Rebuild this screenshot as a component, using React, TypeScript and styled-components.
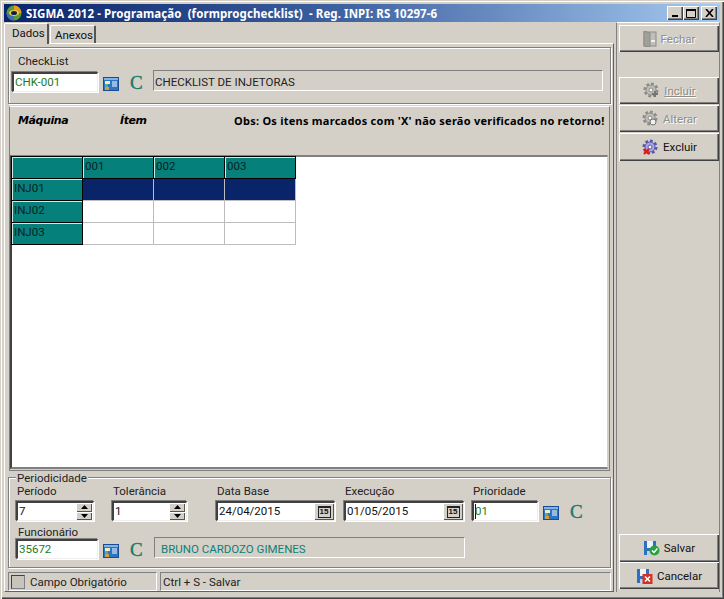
import React from 'react';
import styled, { createGlobalStyle } from 'styled-components';

const Global = createGlobalStyle`
  html, body { margin: 0; padding: 0; background: #d4d0c8; overflow: hidden; }
  * { box-sizing: border-box; }
`;
const FONT = `Roboto, "Liberation Sans", Arial, sans-serif`;
const BOLD = `"Noto Sans", "DejaVu Sans", sans-serif`;

const Window = styled.div`
  width: 724px; height: 599px; background: #d4d0c8; display: flex; flex-direction: column;
  padding: 4px 4px 3px 4px; overflow: hidden; font-family: ${FONT}; font-size: 11.5px; color: #000;
  box-shadow: inset 1px 1px 0 #d4d0c8, inset 2px 2px 0 #fff, inset -1px -1px 0 #404040, inset -2px -2px 0 #808080;
`;
const TitleBar = styled.div`
  height: 18px; flex: none; display: flex; align-items: center; padding: 0 3px 0 2px;
  background: linear-gradient(90deg, #0a246a 0%, #3a5e9e 45%, #a6caf0 100%);
`;
const TitleText = styled.span`
  margin-left: 4px; color: #fff; font: bold 11.5px ${BOLD}; letter-spacing: 0.09px; white-space: pre; flex: 1;
`;
const WinButtons = styled.div` display: flex; `;
const WinBtn = styled.div<{ $gap?: number }>`
  width: 16px; height: 14px; margin-left: ${p => p.$gap ?? 0}px; background: #d4d0c8; display: flex; align-items: center; justify-content: center;
  box-shadow: inset 1px 1px 0 #fff, inset -1px -1px 0 #404040, inset -2px -2px 0 #808080;
`;
const Main = styled.div` flex: 1; display: flex; min-height: 0; `;
const Left = styled.div` width: 612px; flex: none; display: flex; flex-direction: column; `;
const Tabs = styled.div` height: 21px; flex: none; display: flex; align-items: flex-end; `;
const Tab = styled.div<{ $active?: boolean }>`
  height: ${p => p.$active ? 21 : 18}px; width: ${p => p.$active ? 45 : 46}px; margin-left: ${p => p.$active ? 0 : 1}px;
  padding: ${p => p.$active ? '2px 0 0 7px' : '2px 0 0 4px'}; color: #111;
  border-top: 1px solid #fff; border-left: 1px solid #fff; border-right: 2px solid #555;
  border-radius: 2px 2px 0 0;
  ${p => p.$active ? 'margin-bottom: -1px; z-index: 1; background: #d4d0c8;' : ''}
`;
const Pane = styled.div`
  flex: none; height: 549px; width: 610px; padding: 3px 0 0 3px;
  border-top: 1px solid #fff; border-left: 1px solid #fff; border-right: 1px solid #606060; border-bottom: 1px solid #606060;
  display: flex; flex-direction: column;
`;
const TopGroup = styled.div`
  height: 57px; width: 603px; flex: none; padding: 7px 0 0 3px;
  border: 1px solid #808080; box-shadow: inset 1px 1px 0 #fff, 1px 1px 0 #fff;
`;
const GroupLabel = styled.div` margin-left: 6px; height: 17px; line-height: 13px; color: #222; `;
const LookupRow = styled.div` display: flex; align-items: center; `;
const Input = styled.div<{ $w: number; $h?: number }>`
  width: ${p => p.$w}px; height: ${p => p.$h ?? 20}px; background: #fff; flex: none; display: flex; align-items: center; position: relative;
  border-top: 2px solid #404040; border-left: 2px solid #404040; border-right: 1px solid #eee; border-bottom: 1px solid #eee;
  box-shadow: 1px 1px 0 #fff, -1px -1px 0 #808080; padding: 0 0 1px 1px; color: #111;
`;
const GreenText = styled.span` color: #1d7a1d; `;
const Caret = styled.span` display: inline-block; width: 1px; height: 15px; background: #111; margin-right: -1px; `;
const CLetter = styled.span<{ $ml?: number }>`
  margin-left: ${p => p.$ml ?? 11}px; width: 13px; font: 400 19px "Liberation Serif", serif; -webkit-text-stroke: 0.4px #207a6c; color: #207a6c; line-height: 18px; margin-top: 2px;
`;
const Display = styled.div<{ $w: number; $teal?: boolean; $ml?: number }>`
  width: ${p => p.$w}px; height: 21px; margin-left: ${p => p.$ml ?? 10}px; margin-top: -3px; padding: 2px 0 0 ${p => p.$teal ? 6 : 1}px; display: flex; align-items: center;
  color: ${p => p.$teal ? '#0f7f76' : '#222'};
  border-top: 1px solid #808080; border-left: 1px solid #808080; border-right: 1px solid #fff; border-bottom: 1px solid #fff;
`;
const GridPanel = styled.div`
  margin: 2px 0 0 1px; width: 601px; height: 365px; flex: none;
  border-top: 1px solid #fff; border-left: 1px solid #808080; border-right: 1px solid #808080; border-bottom: 1px solid #808080;
  display: flex; flex-direction: column;
`;
const GridHeader = styled.div` height: 48px; flex: none; display: flex; align-items: flex-start; padding: 7px 0 0 8px; `;
const HeaderCaption = styled.div<{ $w: number }>`
  width: ${p => p.$w}px; font: italic bold 11px "DejaVu Sans", sans-serif; letter-spacing: -0.4px; line-height: 13px; flex: none;
`;
const Obs = styled.div`
  font: bold 11px ${BOLD}; letter-spacing: 0.25px; line-height: 13px; white-space: nowrap; color: #000;
`;
const GridBox = styled.div`
  width: 598px; height: 314px; background: #fff;
  border-top: 2px solid #808080; border-left: 2px solid #404040; border-right: 1px solid #d4d0c8; border-bottom: 2px solid #808080;
`;
const Table = styled.div`
  display: grid; grid-template-columns: repeat(4, 70px); grid-auto-rows: 21px; gap: 1px; width: 284px; background: #bdbdbd; padding: 0 1px 1px 0;
`;
const FixedCell = styled.div`
  background: #05807a; color: #082222; padding: 2px 0 0 2px; line-height: 14px;
  box-shadow: inset 1px 1px 0 #d0e8e4, 0 0 0 1px #000;
`;
const DataCell = styled.div<{ $sel?: boolean }>` background: ${p => p.$sel ? '#0a246a' : '#fff'}; `;
const Period = styled.div`
  position: relative; margin-top: 6px; padding: 7px 0 0 7px; width: 603px; height: 91px; flex: none;
  border: 1px solid #808080; box-shadow: inset 1px 1px 0 #fff, 1px 1px 0 #fff;
`;
const Legend = styled.div`
  position: absolute; left: 7px; top: -6px; padding: 0 1px; background: #d4d0c8; color: #222; line-height: 12px; height: 12px;
`;
const FieldRow = styled.div` display: flex; height: 41px; `;
const Field = styled.div<{ $w: number }>` width: ${p => p.$w}px; flex: none; display: flex; flex-direction: column; `;
const FieldLabel = styled.label<{ $h?: number; $pl?: number }>` height: ${p => p.$h ?? 16}px; line-height: 13px; padding-left: ${p => p.$pl ?? 1}px; color: #222; `;
const Spin = styled.div`
  position: absolute; right: 1px; top: 0; width: 16px; height: 17px; display: flex; flex-direction: column;
`;
const SpinBtn = styled.div`
  flex: 1; background: #d4d0c8; display: flex; align-items: center; justify-content: center;
  box-shadow: inset 1px 1px 0 #fff, inset -1px -1px 0 #555;
`;
const CalBtn = styled.div`
  position: absolute; right: 0; top: 0; width: 20px; height: 17px; background: #d4d0c8; display: flex; align-items: center; justify-content: center;
  box-shadow: inset 1px 1px 0 #fff, inset -1px -1px 0 #555;
`;
const CalGlyph = styled.span`
  border: 1px solid #222; border-top-width: 2px; font: bold 8px/8px "Liberation Sans", sans-serif; width: 13px; height: 12px; text-align: center; color: #111;
`;
const StatusBar = styled.div` display: flex; height: 19px; margin-top: 4px; width: 603px; flex: none; `;
const StatusCell = styled.div<{ $w: number }>`
  width: ${p => p.$w}px; flex: none; margin-right: 3px; display: flex; align-items: center; padding-left: 2px; color: #222;
  border-top: 1px solid #808080; border-left: 1px solid #808080; border-right: 1px solid #fff; border-bottom: 1px solid #fff;
`;
const Swatch = styled.div`
  width: 14px; height: 14px; margin-right: 5px; background: #c8c4bc; border: 1px solid #404040; border-right-color: #808080; border-bottom-color: #808080;
`;
const Side = styled.div`
  width: 104px; flex: none; padding: 2px 0 0 2px; display: flex; flex-direction: column; height: 570px;
  border-left: 1px solid #808080; border-top: 1px solid #fff; border-right: 1px solid #808080;
`;
const Action = styled.div<{ $mt?: number; $off?: boolean; $h?: number }>`
  width: 100px; height: ${p => p.$h ?? 27}px; flex: none; margin-top: ${p => p.$mt ?? 0}px; display: flex; align-items: center; justify-content: center; gap: 4px;
  background: #d4d0c8; color: ${p => p.$off ? '#8e8c86' : '#111'};
  ${p => p.$off ? 'text-shadow: 1px 1px 0 #fff;' : ''}
  box-shadow: inset 1px 1px 0 #fff, inset -1px -1px 0 #404040, inset -2px -2px 0 #808080;
`;
const Underlined = styled.span` text-decoration: underline; `;

const Logo = () => (
  <svg width="16" height="16" viewBox="0 0 16 16">
    <circle cx="8" cy="8" r="7.5" fill="#5c9a3c" />
    <path d="M8 .5A7.5 7.5 0 0 1 15.5 8H8z" fill="#e89a20" />
    <path d="M8 15.5A7.5 7.5 0 0 1 .5 8H8z" fill="#3f6fb8" />
    <path d="M3 8a5 3 0 0 1 10 0 5 3 0 0 1-10 0" fill="#e8d040" />
    <ellipse cx="8" cy="8" rx="3" ry="2" fill="#10204a" />
  </svg>
);
const Card = () => (
  <svg width="16" height="15" viewBox="0 0 16 15" style={{ marginLeft: 5, marginTop: 2, flex: 'none' }}>
    <rect x="0.5" y="1.5" width="15" height="13" fill="#2c74c4" stroke="#1a4c94" />
    <rect x="1" y="2" width="14" height="2" fill="#7fb4ea" />
    <rect x="2" y="5" width="5" height="3" fill="#f4ecc0" />
    <rect x="2" y="8" width="3" height="3" fill="#58b078" />
    <rect x="2" y="11" width="4" height="3" fill="#d0a040" />
    <path d="M9 6h5M9 8h5M9 10h5" stroke="#fff" />
  </svg>
);
const Door = () => (
  <svg width="14" height="16" viewBox="0 0 14 16">
    <rect x="1" y="1" width="12" height="14" fill="#c0beb8" stroke="#8e8c86" />
    <path d="M1 0l6 2v14l-6-1z" fill="#a0a09a" stroke="#8e8c86" />
    <rect x="8" y="9" width="4" height="2" fill="#f0f0f0" />
  </svg>
);
const Gear = ({ fill, stroke, badge }: { fill: string; stroke: string; badge: 'plus' | 'at' | 'x' }) => (
  <svg width="18" height="17" viewBox="0 0 18 17">
    <circle cx="9" cy="8" r="6" fill="none" stroke={stroke} strokeWidth="3" strokeDasharray="2.6 2" />
    <circle cx="9" cy="8" r="5" fill={fill} stroke={stroke} />
    <circle cx="9" cy="8" r="2" fill="#f4f4f4" stroke={stroke} />
    {badge === 'plus' && <path d="M13 9v6M10 12h6" stroke="#77756f" strokeWidth="2" />}
    {badge === 'at' && <circle cx="12" cy="12" r="3" fill="#eee" stroke="#77756f" />}
    {badge === 'x' && <path d="M3 10l5 5M8 10l-5 5" stroke="#d82020" strokeWidth="2.4" />}
  </svg>
);
const Floppy = ({ kind }: { kind: 'ok' | 'no' }) => (
  <svg width="17" height="16" viewBox="0 0 17 16">
    <path d="M1 1h12v14H1z" fill="#2f6fc0" />
    <rect x="4" y="1" width="6" height="7" fill="#eef2fa" />
    <rect x="4" y="11" width="6" height="4" fill="#bcd0ea" />
    {kind === 'ok'
      ? <><circle cx="11.5" cy="10.5" r="5" fill="#2ca040" /><path d="M9 10.5l2 2 3.4-4" stroke="#fff" strokeWidth="1.5" fill="none" /></>
      : <><rect x="6.5" y="6" width="10" height="10" fill="#d83020" /><path d="M9 8.5l5 5M14 8.5l-5 5" stroke="#fff" strokeWidth="1.6" /></>}
  </svg>
);
const Arrow = ({ up }: { up?: boolean }) => (
  <svg width="7" height="4" viewBox="0 0 7 4"><path d={up ? 'M3.5 0L7 4H0z' : 'M0 0h7L3.5 4z'} fill="#000" /></svg>
);
const SpinControl = () => (
  <Spin>
    <SpinBtn><Arrow up /></SpinBtn>
    <SpinBtn><Arrow /></SpinBtn>
  </Spin>
);

export default function App() {
  const rows = ['INJ01', 'INJ02', 'INJ03'];
  return (
    <Window>
      <Global />
      <TitleBar>
        <Logo />
        <TitleText>{'SIGMA 2012 - Programação  (formprogchecklist)  - Reg. INPI: RS 10297-6'}</TitleText>
        <WinButtons>
          <WinBtn><svg width="8" height="8"><rect x="1" y="6" width="6" height="2" fill="#000" /></svg></WinBtn>
          <WinBtn><svg width="10" height="9"><path d="M.5 1.5h9v7h-9z" fill="none" stroke="#000" /><rect y="0" width="10" height="2" /></svg></WinBtn>
          <WinBtn $gap={2}><svg width="9" height="8"><path d="M1 0l7 8M8 0l-7 8" stroke="#000" strokeWidth="1.6" /></svg></WinBtn>
        </WinButtons>
      </TitleBar>
      <Main>
        <Left>
          <Tabs>
            <Tab $active>Dados</Tab>
            <Tab>Anexos</Tab>
          </Tabs>
          <Pane>
            <TopGroup>
              <GroupLabel>CheckList</GroupLabel>
              <LookupRow>
                <Input $w={86}><GreenText>CHK-001</GreenText></Input>
                <Card />
                <CLetter>C</CLetter>
                <Display $w={450} $ml={10}>CHECKLIST DE INJETORAS</Display>
              </LookupRow>
            </TopGroup>
            <GridPanel>
              <GridHeader>
                <HeaderCaption $w={102}>Máquina</HeaderCaption>
                <HeaderCaption $w={114}>Ítem</HeaderCaption>
                <Obs>Obs: Os itens marcados com 'X' não serão verificados no retorno!</Obs>
              </GridHeader>
              <GridBox>
                <Table>
                  <FixedCell />
                  <FixedCell>001</FixedCell>
                  <FixedCell>002</FixedCell>
                  <FixedCell>003</FixedCell>
                  {rows.map((r, i) => (
                    <React.Fragment key={r}>
                      <FixedCell>{r}</FixedCell>
                      <DataCell $sel={i === 0} />
                      <DataCell $sel={i === 0} />
                      <DataCell $sel={i === 0} />
                    </React.Fragment>
                  ))}
                </Table>
              </GridBox>
            </GridPanel>
            <Period>
              <Legend>Periodicidade</Legend>
              <FieldRow>
                <Field $w={96}><FieldLabel>Período</FieldLabel><Input $w={78}>7<SpinControl /></Input></Field>
                <Field $w={104}><FieldLabel>Tolerância</FieldLabel><Input $w={75}>1<SpinControl /></Input></Field>
                <Field $w={128}><FieldLabel>Data Base</FieldLabel><Input $w={119}>24/04/2015<CalBtn><CalGlyph>15</CalGlyph></CalBtn></Input></Field>
                <Field $w={128}><FieldLabel>Execução</FieldLabel><Input $w={120}>01/05/2015<CalBtn><CalGlyph>15</CalGlyph></CalBtn></Input></Field>
                <Field $w={147}>
                  <FieldLabel>Prioridade</FieldLabel>
                  <LookupRow>
                    <Input $w={66}><Caret /><GreenText>01</GreenText></Input>
                    <Card />
                    <CLetter>C</CLetter>
                  </LookupRow>
                </Field>
              </FieldRow>
              <Field $w={500}>
                <FieldLabel $h={13} $pl={2}>Funcionário</FieldLabel>
                <LookupRow>
                  <Input $w={82}><GreenText>35672</GreenText></Input>
                  <Card />
                  <CLetter>C</CLetter>
                  <Display $w={311} $teal $ml={11}>BRUNO CARDOZO GIMENES</Display>
                </LookupRow>
              </Field>
            </Period>
            <StatusBar>
              <StatusCell $w={149}><Swatch />Campo Obrigatório</StatusCell>
              <StatusCell $w={451}>Ctrl + S - Salvar</StatusCell>
            </StatusBar>
          </Pane>
        </Left>
        <Side>
          <Action $off><Door />Fechar</Action>
          <Action $off $mt={25}><Gear fill="#c0beb8" stroke="#8e8c86" badge="plus" /><Underlined>Incluir</Underlined></Action>
          <Action $off $mt={1}><Gear fill="#c0beb8" stroke="#8e8c86" badge="at" />Alterar</Action>
          <Action $mt={1} $h={28}><Gear fill="#a8a8e8" stroke="#5858a8" badge="x" />Excluir</Action>
          <Action $mt={373} $h={28}><Floppy kind="ok" />Salvar</Action>
          <Action><Floppy kind="no" />Cancelar</Action>
        </Side>
      </Main>
    </Window>
  );
}
